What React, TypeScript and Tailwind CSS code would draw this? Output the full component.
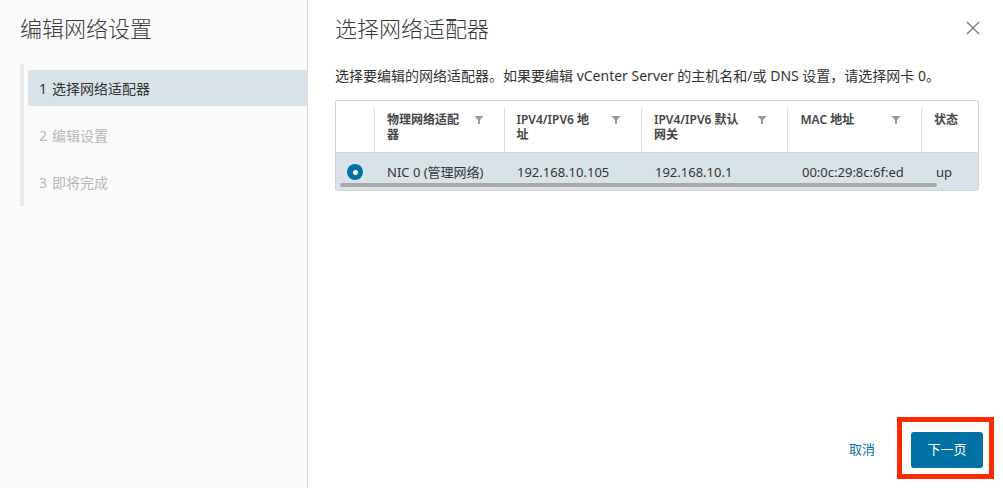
import React from "react";

const steps = [
  { n: 1, label: "选择网络适配器", active: true },
  { n: 2, label: "编辑设置", active: false },
  { n: 3, label: "即将完成", active: false },
];

const FilterIcon = () => (
  <svg width="10" height="10" viewBox="0 0 10 10" className="shrink-0">
    <path d="M0.5 1 H9.5 L6 5 V9 L4 9 V5 Z" fill="#9a9a9a" />
  </svg>
);

const HeaderCell = ({
  width,
  lines,
  filter = true,
}: {
  width: string;
  lines: string[];
  filter?: boolean;
}) => (
  <div className={`${width} h-full flex border-l border-[#dddddd] my-[7px] mb-[5px]`}>
    <div className="flex-1 flex items-start justify-between pl-[12px] pr-[20px] pt-[4px]">
      <div className="text-[12px] leading-[15px] font-semibold text-[#454545] whitespace-nowrap">
        {lines.map((l, i) => (
          <div key={i}>{l}</div>
        ))}
      </div>
      {filter && (
        <div className="pt-[3px]">
          <FilterIcon />
        </div>
      )}
    </div>
  </div>
);

export default function App() {
  return (
    <div className="w-[1003px] h-[488px] flex overflow-hidden bg-white font-['Noto_Sans','Noto_Sans_CJK_SC',sans-serif] text-[#333]">
      {/* 左侧步骤 */}
      <aside className="w-[308px] h-full bg-[#fafafa] border-r border-[#dcdcdc] shrink-0">
        <h1 className="pl-[20px] pt-[15px] text-[22px] leading-[26px] font-light text-[#3a3a3a]">
          编辑网络设置
        </h1>
        <div className="ml-[20px] mt-[23px] border-l-[4px] border-[#e8e8e8] pl-[4px] py-[6px] flex flex-col gap-[11px]">
          {steps.map((s) => (
            <div
              key={s.n}
              className={`h-[36px] flex items-center pl-[11px] text-[14px] rounded-l-[3px] ${
                s.active ? "bg-[#d8e3e9] text-[#333]" : "text-[#b8b8b8]"
              }`}
            >
              <span className="mr-[5px]">{s.n}</span>
              {s.label}
            </div>
          ))}
        </div>
      </aside>

      {/* 右侧内容 */}
      <main className="flex-1 h-full relative flex flex-col pl-[27px] pr-[24px]">
        <div className="flex items-center justify-between pt-[15px]">
          <h2 className="text-[22px] leading-[26px] font-light text-[#3a3a3a]">选择网络适配器</h2>
          <button className="w-[16px] h-[16px] mr-[-2px] flex items-center justify-center">
            <svg width="14" height="14" viewBox="0 0 14 14">
              <path d="M1 1 L13 13 M13 1 L1 13" stroke="#777" strokeWidth="1.2" />
            </svg>
          </button>
        </div>

        <p className="mt-[26px] text-[14px] leading-[18px] text-[#333] whitespace-nowrap">
          选择要编辑的网络适配器。如果要编辑 vCenter Server 的主机名和/或 DNS 设置，请选择网卡 0。
        </p>

        {/* 表格 */}
        <div className="mt-[15px] w-[644px] border border-[#d4d4d4] rounded-[2px] overflow-hidden">
          <div className="h-[51px] flex items-stretch">
            <div className="w-[38px] shrink-0" />
            <HeaderCell width="w-[130px]" lines={["物理网络适配", "器"]} />
            <HeaderCell width="w-[138px]" lines={["IPV4/IPV6 地", "址"]} />
            <HeaderCell width="w-[147px]" lines={["IPV4/IPV6 默认", "网关"]} />
            <HeaderCell width="w-[134px]" lines={["MAC 地址"]} />
            <HeaderCell width="flex-1" lines={["状态"]} filter={false} />
          </div>
          <div className="relative h-[38px] bg-[#d8e3e9] border-t border-[#d4d4d4] flex items-start pt-[10px] text-[13px] text-[#333]">
            <div className="w-[38px] shrink-0 flex justify-center pt-[1px]">
              <div className="w-[16px] h-[16px] rounded-full bg-[#0072a3] flex items-center justify-center">
                <div className="w-[5px] h-[5px] rounded-full bg-white" />
              </div>
            </div>
            <div className="w-[130px] pl-[13px]">NIC 0 (管理网络)</div>
            <div className="w-[138px] pl-[13px]">192.168.10.105</div>
            <div className="w-[147px] pl-[13px]">192.168.10.1</div>
            <div className="w-[134px] pl-[13px]">00:0c:29:8c:6f:ed</div>
            <div className="flex-1 pl-[13px]">up</div>
            <div className="absolute left-[4px] bottom-[3px] w-[597px] h-[4px] rounded-[2px] bg-[#a9a9a9]" />
          </div>
        </div>

        <div className="flex-1" />

        {/* 底部按钮 */}
        <div className="flex items-center justify-end gap-[24px] pb-[20px] mr-[-4px]">
          <button className="h-[36px] px-[12px] text-[13px] text-[#0072a3]">取消</button>
          <button className="h-[36px] w-[72px] rounded-[3px] bg-[#0072a3] text-white text-[13px]">下一页</button>
        </div>

        {/* 标注框 */}
        <div className="absolute left-[589px] top-[417px] w-[97px] h-[62px] border-[5px] border-[#ff2a00] pointer-events-none" />
      </main>
    </div>
  );
}
